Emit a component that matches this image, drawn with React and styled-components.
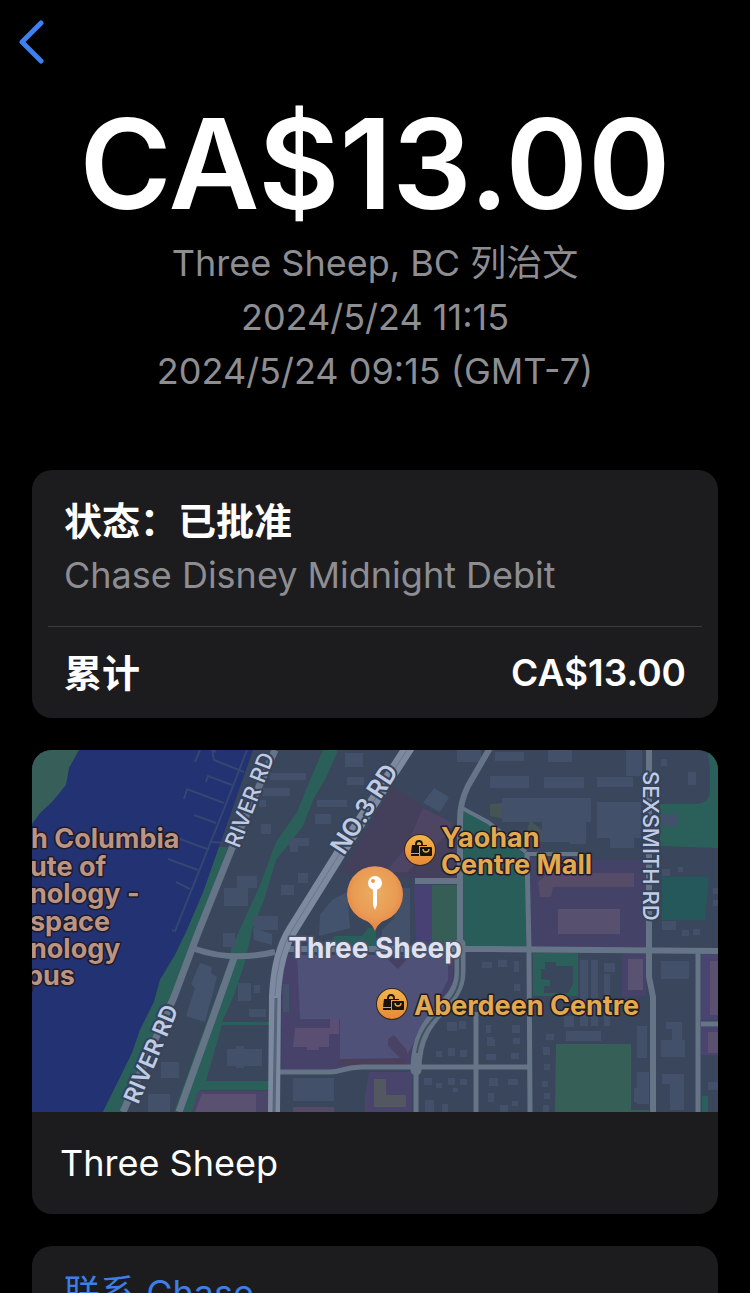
import React from 'react'
import styled, { createGlobalStyle } from 'styled-components'

const GlobalStyle = createGlobalStyle`
  * { box-sizing: border-box; }
  body {
    margin: 0;
    background: #000;
    color: #fff;
    font-family: Inter, "Noto Sans CJK SC", sans-serif;
  }
`

// small buildings on the map: x, y, width, height
const buildings = [
  [205, 126, 20, 12], [192, 138, 24, 18], [191, 183, 12, 14], [222, 166, 18, 14],
  [206, 233, 13, 18], [222, 235, 6, 8], [217, 259, 17, 8], [195, 299, 35, 17],
  [204, 296, 8, 22], [129, 312, 18, 16], [116, 344, 22, 18], [227, 50, 7, 7],
  [230, 38, 28, 8], [238, 23, 36, 7], [285, 50, 30, 7], [283, 64, 16, 10],
  [257, 88, 20, 8], [258, 92, 8, 10], [229, 74, 10, 10], [249, 135, 13, 10],
  [266, 123, 10, 10], [228, 166, 18, 14], [313, 3, 18, 14], [315, 27, 17, 8],
  [425, 0, 24, 12], [463, 2, 29, 9], [516, 0, 24, 12], [458, 26, 39, 12],
  [512, 27, 40, 11], [565, 27, 36, 10], [594, 0, 16, 26], [470, 48, 89, 24],
  [538, 56, 16, 38], [510, 72, 40, 20], [565, 52, 44, 36], [578, 86, 24, 12],
  [656, 22, 8, 13], [630, 64, 16, 12], [629, 9, 6, 7], [630, 119, 8, 7],
  [646, 117, 5, 5], [630, 171, 14, 9], [650, 180, 7, 6], [661, 179, 7, 6],
  [681, 138, 5, 6], [681, 150, 5, 6], [548, 210, 8, 66], [559, 210, 7, 66],
  [572, 224, 6, 52], [572, 213, 11, 9], [629, 211, 28, 18], [534, 281, 35, 10],
  [605, 276, 10, 32], [609, 276, 6, 10], [640, 272, 10, 35], [634, 272, 12, 7],
  [629, 290, 24, 17],
  [605, 322, 12, 32], [602, 338, 8, 14], [638, 324, 14, 36], [630, 324, 10, 10],
  [676, 332, 10, 8], [466, 210, 9, 7], [482, 211, 5, 11], [450, 212, 10, 6],
  [482, 234, 6, 7], [480, 275, 8, 8], [481, 288, 7, 6], [479, 303, 8, 6],
  [415, 272, 10, 9], [427, 271, 7, 8], [404, 301, 6, 6], [416, 298, 7, 8],
  [428, 300, 7, 7], [454, 275, 5, 8], [455, 287, 6, 9], [454, 304, 10, 6],
  [458, 289, 5, 7], [392, 328, 8, 7], [404, 333, 6, 5], [416, 328, 7, 7],
  [428, 329, 7, 6], [421, 338, 5, 4], [393, 350, 9, 12], [410, 354, 6, 8],
  [457, 328, 9, 8], [476, 329, 10, 6], [456, 343, 6, 9], [468, 355, 8, 7],
  [480, 351, 6, 5], [511, 297, 7, 8], [512, 314, 6, 6], [510, 331, 6, 6],
  [512, 343, 6, 6], [511, 355, 6, 7], [532, 266, 10, 11], [514, 284, 8, 6],
  [251, 234, 6, 28], [261, 328, 41, 23],
]

const piers = [
  'M215 0L194 54L143 181L140 180', 'M212 22L182 10L180 0L184 2', 'M168 0L163 12',
  'M200 35L176 26L174 32', 'M192 53L155 39L152 49', 'M184 73L162 65', 'M175 99L148 89',
  'M166 120L136 109', 'M158 139L144 132', 'M194 93L179 92',
]

function ShopBadge({ x, y }) {
  return (
    <g transform={`translate(${x} ${y})`}>
      <circle r="16" fill="#33281f" />
      <circle r="15" fill="url(#shop)" />
      <path d="M-4 -5v-1a3 3 0 0 1 6 0v1" fill="none" stroke="#17130f" strokeWidth="1.8" />
      <path d="M-8 -5H7V-4H-1V3H-9Z" fill="#17130f" />
      <path d="M-9 4H-1V6H-9Z" fill="#17130f" />
      <rect x="0" y="-3" width="12" height="9" rx="1" fill="#17130f" />
      <path d="M3 -1a3 3 0 0 0 6 0" fill="none" stroke="#eda43c" strokeWidth="1.4" />
    </g>
  )
}

function Map() {
  return (
    <MapSvg viewBox="0 0 686 362" role="img" aria-label="Three Sheep">
      <defs>
        <linearGradient id="shop" x1="0" y1="0" x2="0" y2="1">
          <stop offset="0" stopColor="#f4b44a" />
          <stop offset="1" stopColor="#e58a36" />
        </linearGradient>
        <radialGradient id="pin" cx="0.5" cy="0.4" r="0.65">
          <stop offset="0" stopColor="#ebae62" />
          <stop offset="0.6" stopColor="#e99b53" />
          <stop offset="1" stopColor="#e3793c" />
        </radialGradient>
      </defs>

      <rect width="686" height="362" fill="#3a465b" />

      {/* water and banks */}
      <path d="M0 0H221L186 100L172 140L155 180L143 205L128 230L122 252L108 280L100 303L71 362H0Z" fill="#233272" />
      <path d="M0 0H47L37 18L34 35L20 52L8 63L0 74Z" fill="#375e59" />
      <path d="M187 97H196L164 190L93 362H71L100 303L108 280L122 252L128 230L143 205L155 180L172 140Z" fill="#2a6059" />
      {piers.map((d) => <path key={d} d={d} fill="none" stroke="#344671" strokeWidth="2" />)}

      {/* green belts */}
      <path d="M291 0H306L294 28L282 48L271 76L244 110L232 150L220 180L213 212L202 245L190 272H238V275H190L174 331H238V340H168L160 362H142L168 290L197 212L203 180L203 190L228 135L244 92L265 62L278 30Z" fill="#2a6059" />
      <path d="M431 60L462 76L494 103V198H431Z" fill="#295d5a" />
      <path d="M400 135H425V196H400Z" fill="#365e56" />
      <path d="M295 196L303 186H330L336 178H344V196Z" fill="#295f5a" />
      <path d="M628 54H662Q678 54 678 40V20L676 4V0H686V98L628 96Z" fill="#2a6059" />
      <path d="M630 127H677L673 170H630Z" fill="#25585b" />
      <path d="M501 203H546V246H501Z" fill="#2a6059" />
      <path d="M524 294H599V360H617V362H523Z" fill="#365f57" />
      <path d="M670 346H676V362H670Z" fill="#2a6059" />

      {/* shopping blocks */}
      <path d="M361 37L391 57L424 76V128H386L345 124L308 122Z" fill="#443f5b" />
      <path d="M391 58L421 73L414 86L375 122H354L374 97Z" fill="#4e4564" />
      <path d="M382 135H400V196H384Z" fill="#474273" />
      <path d="M250 205H423L419 243L386 284L380 316H325L298 320H250Z" fill="#464269" />
      <path d="M265 205H416V230L397 267L373 308L308 309V269H268Z" fill="#505178" />
      <path d="M352 206L366 219L378 206Z" fill="#454164" />
      <path d="M356 289L362 285L374 299L378 311L368 308L356 296Z" fill="#4a4264" />
      <path d="M309 309H374V315H305Z" fill="#4c4059" />
      <path d="M263 278H298V269H307V284H297V297H287V300H275V297H261Z" fill="#5a4f72" />
      <path d="M337 322H380V362H333V345Z" fill="#48446c" />
      <path d="M261 357H302V362H261Z" fill="#554a67" />
      <path d="M342 329H354V345H374V357H342Z" fill="#535760" />
      <path d="M166 341H238V362H160Z" fill="#4a4569" />
      <path d="M170 344H224V362H163Z" fill="#5a5170" />
      <path d="M499 107L545 110H614V197H499Z" fill="#454268" />
      <path d="M516 123H602V137H521L519 147H508L506 132Z" fill="#564c68" />
      <path d="M526 159H588V184H526Z" fill="#57506e" />
      <path d="M590 204H614V246H590Z" fill="#474269" />
      <path d="M596 209H611V240H596Z" fill="#595371" />
      <path d="M669 204H686V270H669Z M669 277H686V305H669Z" fill="#4a4470" />
      <path d="M678 211H686V265H678Z M676 282H686V303H676Z" fill="#5b5070" />
      <path d="M458 54L472 53L478 57L473 69L458 66Z" fill="#455556" />
      <path d="M498 70L515 85L509 92L494 84Z" fill="#455556" />

      {/* buildings */}
      {buildings.map(([x, y, w, h]) => (
        <rect key={`${x}-${y}`} x={x} y={y} width={w} height={h} fill="#425069" />
      ))}
      <path d="M168 213L180 217L179 223L185 227L173 272L154 266L163 238L159 234Z" fill="#44536d" />
      <path d="M402 38L417 47L408 62L391 53Z" fill="#44536d" />
      <path d="M300 150L315 142L318 178L287 186L288 165Z" fill="#44536d" />
      <path d="M365 138H378V196H350V180L362 168Z" fill="#44516a" />
      <path d="M221 178L240 184V195L222 190Z" fill="#44536d" />
      <path d="M513 212H524V216H541V234L536 243H512V236H518V230L509 229V219H513Z" fill="#3a465b" />

      {/* minor roads */}
      <g fill="none" stroke="#667488" strokeWidth="6" strokeLinejoin="round">
        <path d="M243 0L200 98L166 183L142 247L91 362" strokeWidth="7" />
        <path d="M202 208L180 270L147 362" strokeWidth="7" />
        <path d="M163 199Q200 212 243 202" strokeWidth="6" />
        <path d="M253 199H458L686 201" strokeWidth="6" />
        <path d="M458 -2L436 36Q428 52 428 70V200" />
        <path d="M430 58L456 72L494 102" strokeWidth="4" />
        <path d="M494 104H546" strokeWidth="4" />
        <path d="M383 131H426" />
        <path d="M495 103L497 200L498 362" strokeWidth="5" />
        <path d="M617 0V227L621 247V362" />
        <path d="M666 203V362M669 274H686" strokeWidth="5" />
        <path d="M248 322H298C310 322 312 317 330 317H496" strokeWidth="5" />
        <path d="M444 262V362M384 316V362" strokeWidth="5" />
        <path d="M428 194V222C428 258 384 260 384 320" strokeWidth="11" strokeLinecap="round" />
      </g>
      <path d="M428 205V224C427 258 390 263 385 303" fill="none" stroke="#42535f" strokeWidth="2" />

      {/* No.3 Rd */}
      <path d="M377 -3L308 103L260 180Q245 204 243 246L242 362" fill="none" stroke="#7c899f" strokeWidth="12" />
      <path d="M375 0L308 103L260 180Q245 204 243 246" fill="none" stroke="#68758c" strokeWidth="1" />
      <path d="M244 248L242 362" fill="none" stroke="#56657a" strokeWidth="3" />

      {/* road names */}
      <RoadName $size={22} transform="translate(207 99) rotate(-69)">RIVER RD</RoadName>
      <RoadName $size={23} $weight={600} transform="translate(106 355) rotate(-67)">RIVER RD</RoadName>
      <RoadName $size={25} $weight={600} transform="translate(312 106) rotate(-57)">NO.3 RD</RoadName>
      <RoadName $size={22} transform="translate(611 21) rotate(90)">SEXSMITH RD</RoadName>

      {/* places */}
      <Place $color="#bc9484" x="-1" y="98">h Columbia</Place>
      <Place $color="#bc9484" x="-2" y="126">ute of</Place>
      <Place $color="#bc9484" x="-2" y="153">nology -</Place>
      <Place $color="#bc9484" x="-2" y="181">space</Place>
      <Place $color="#bc9484" x="-2" y="208">nology</Place>
      <Place $color="#bc9484" x="-6" y="235">pus</Place>
      <Place $color="#e3a94e" x="409" y="97">Yaohan</Place>
      <Place $color="#e3a94e" x="409" y="124">Centre Mall</Place>
      <Place $color="#e3a94e" x="382" y="265">Aberdeen Centre</Place>
      <ShopBadge x={388} y={100} />
      <ShopBadge x={360} y={254} />

      {/* pin */}
      <path d="M343 181C341 176 338 172 332 170A28 28 0 1 1 354 170C348 172 345 176 343 181Z" fill="url(#pin)" />
      <circle cx="343" cy="133" r="7" fill="#fff" />
      <path d="M341 138H345V155L343 160L341 155Z" fill="#fff" />
      <circle cx="341" cy="131" r="2" fill="#e99b53" />
      <Place $color="#dfe2ee" $edge="#4b526b" $size={28} x="343" y="208" textAnchor="middle">Three Sheep</Place>
    </MapSvg>
  )
}

function App() {
  return (
    <Page>
      <GlobalStyle />
      <NavBar>
        <BackButton type="button" aria-label="返回">
          <svg width="28" height="44" viewBox="0 0 28 44">
            <path d="M23 3L4 22L23 41" fill="none" stroke="#3d81ee" strokeWidth="5" strokeLinecap="round" strokeLinejoin="round" />
          </svg>
        </BackButton>
      </NavBar>

      <Summary>
        <Amount>CA$13.00</Amount>
        <Detail>Three Sheep, BC 列治文</Detail>
        <Detail>2024/5/24 11:15</Detail>
        <Detail>2024/5/24 09:15 (GMT-7)</Detail>
      </Summary>

      <Cards>
        <Card>
          <Status>
            <Label>状态：已批准</Label>
            <Line $muted>Chase Disney Midnight Debit</Line>
          </Status>
          <Divider />
          <TotalRow>
            <Label>累计</Label>
            <Total>CA$13.00</Total>
          </TotalRow>
        </Card>

        <Card>
          <Map />
          <Merchant>
            <Line>Three Sheep</Line>
          </Merchant>
        </Card>

        <Card>
          <ContactLink href="#contact">联系 Chase</ContactLink>
        </Card>
      </Cards>
    </Page>
  )
}

export default App

const Page = styled.main`
  height: 100vh;
  overflow: hidden;
  background: #000;
`

const NavBar = styled.nav`
  display: flex;
  align-items: center;
  height: 84px;
  padding: 0 18px;
`

const BackButton = styled.button`
  display: flex;
  padding: 0;
  border: 0;
  background: none;
  cursor: pointer;
`

const Summary = styled.header`
  display: flex;
  flex-direction: column;
  align-items: center;
  padding-top: 8px;
  text-align: center;
`

const Amount = styled.h1`
  margin: 0;
  font-size: 125px;
  font-weight: 600;
  line-height: 144px;
`

const Detail = styled.p`
  margin: 0;
  color: #8d8d92;
  font-size: 36px;
  line-height: 54px;
`

const Cards = styled.div`
  display: flex;
  flex-direction: column;
  gap: 32px;
  padding: 72px 32px 32px;
`

const Card = styled.section`
  overflow: hidden;
  border-radius: 20px;
  background: #1c1c1e;
`

const Status = styled.div`
  padding: 24px 32px;
`

const Line = styled.p`
  margin: 0;
  color: ${(props) => (props.$muted ? '#8d8d92' : '#fff')};
  font-size: 36px;
  line-height: 54px;
`

const Label = styled.h2`
  margin: 0;
  font-size: 38px;
  font-weight: 600;
  line-height: 54px;
`

const Total = styled.strong`
  font-size: 37px;
  font-weight: 600;
  line-height: 54px;
`

const Divider = styled.hr`
  height: 1px;
  margin: 0 16px;
  border: 0;
  background: #3c3c3f;
`

const TotalRow = styled.div`
  display: flex;
  justify-content: space-between;
  padding: 19px 32px 18px;
`

const Merchant = styled.div`
  padding: 24px 28px;
`

const ContactLink = styled.a`
  display: block;
  padding: 20px 32px;
  color: #3d7fe6;
  font-size: 36px;
  line-height: 54px;
  text-decoration: none;
`

const MapSvg = styled.svg`
  display: block;
  width: 100%;
  height: auto;
`

const RoadName = styled.text`
  fill: #c0cbe4;
  stroke: #36435a;
  stroke-width: 4px;
  stroke-linejoin: round;
  paint-order: stroke;
  font-size: ${(props) => props.$size}px;
  font-weight: ${(props) => props.$weight || 500};
`

const Place = styled.text`
  fill: ${(props) => props.$color};
  stroke: ${(props) => props.$edge || '#1f1b27'};
  stroke-width: 3px;
  stroke-linejoin: round;
  paint-order: stroke;
  font-size: ${(props) => props.$size || 27}px;
  font-weight: 700;
`
